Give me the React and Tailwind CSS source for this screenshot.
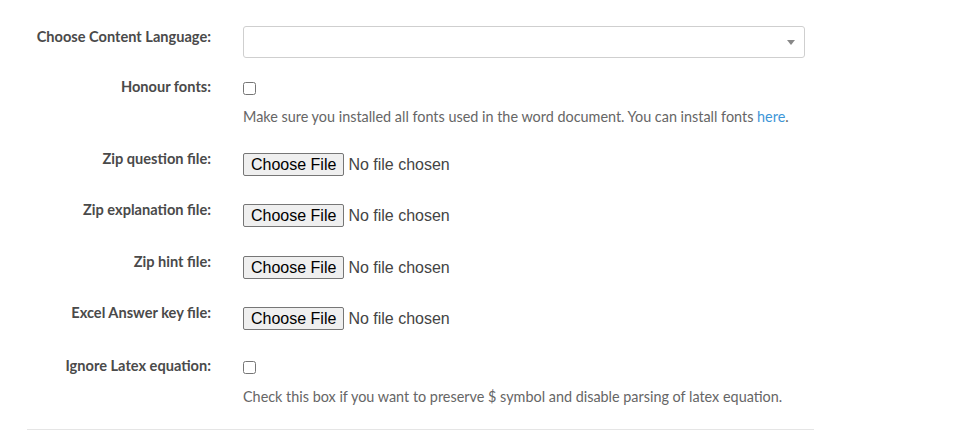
import { useState } from 'react';

function FileInput() {
  return (
    <div className="flex items-center h-[23px]" style={{ fontFamily: '"Liberation Sans", Arial, sans-serif' }}>
      <button className="h-[23px] px-[7px] border border-[#767676] bg-[#efefef] rounded-[2px] text-[16px] leading-[19px] text-black">
        Choose File
      </button>
      <span className="ml-[4px] text-[16px] leading-[19px] text-[#444]">No file chosen</span>
    </div>
  );
}

function Label({ children }) {
  return (
    <label className="block w-[184px] shrink-0 text-right font-bold text-[14.6px] leading-[20px] text-[#4a4a4a] whitespace-nowrap">
      {children}
    </label>
  );
}

export default function App() {
  const [honour, setHonour] = useState(false);
  const [ignoreLatex, setIgnoreLatex] = useState(false);

  const fileRows = [
    { label: 'Zip question file:', mt: 'mt-[22px]' },
    { label: 'Zip explanation file:', mt: 'mt-[24px]' },
    { label: 'Zip hint file:', mt: 'mt-[25px]' },
    { label: 'Excel Answer key file:', mt: 'mt-[24px]' },
  ];

  return (
    <div className="min-h-[438px] bg-white" style={{ fontFamily: 'Lato, "Open Sans", sans-serif' }}>
      <form className="w-[787px] ml-[27px] pt-[26px]">
        {/* Content language */}
        <div className="flex">
          <div className="pt-[1px] shrink-0">
            <Label>Choose Content Language:</Label>
          </div>
          <div className="ml-[32px] relative w-[562px] h-[32px] border border-[#cfcfcf] rounded-[3px] bg-white">
            <span className="absolute right-[9px] top-[13px] w-0 h-0 border-l-[4px] border-r-[4px] border-t-[5px] border-l-transparent border-r-transparent border-t-[#888]" />
          </div>
        </div>

        {/* Honour fonts */}
        <div className="flex mt-[19px]">
          <Label>Honour fonts:</Label>
          <div className="ml-[32px]">
            <input
              type="checkbox"
              checked={honour}
              onChange={() => setHonour(!honour)}
              className="block mt-[5px] w-[13px] h-[13px]"
            />
            <p className="mt-[12px] text-[14.4px] leading-[20px] text-[#666]">
              Make sure you installed all fonts used in the word document. You can install fonts{' '}
              <a href="#" className="text-[#3d96d8]">here</a>.
            </p>
          </div>
        </div>

        {fileRows.map((row) => (
          <div key={row.label} className={`flex ${row.mt}`}>
            <Label>{row.label}</Label>
            <div className="ml-[32px] pt-[4px]">
              <FileInput />
            </div>
          </div>
        ))}

        {/* Ignore latex */}
        <div className="flex mt-[26px]">
          <Label>Ignore Latex equation:</Label>
          <div className="ml-[32px]">
            <input
              type="checkbox"
              checked={ignoreLatex}
              onChange={() => setIgnoreLatex(!ignoreLatex)}
              className="block mt-[5px] w-[13px] h-[13px]"
            />
            <p className="mt-[13px] text-[14.4px] leading-[20px] text-[#666]">
              Check this box if you want to preserve $ symbol and disable parsing of latex equation.
            </p>
          </div>
        </div>

        <hr className="mt-[22px] border-t border-[#e5e5e5]" />
      </form>
    </div>
  );
}
